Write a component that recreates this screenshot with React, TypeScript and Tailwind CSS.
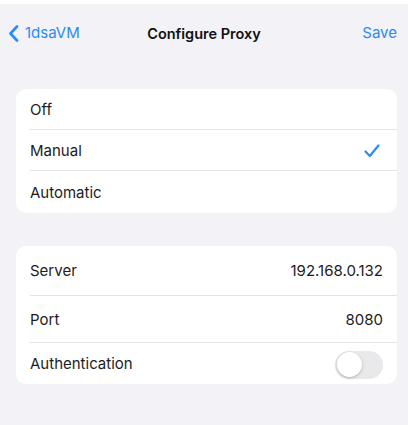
import React from "react";

const font = { fontFamily: "Inter, 'Liberation Sans', sans-serif" };

function Row({
  label,
  height,
  last,
  children,
}: {
  label: string;
  height: string;
  last?: boolean;
  children?: React.ReactNode;
}) {
  return (
    <div className="pl-[14px]">
      <div
        className={`flex items-center justify-between pr-[14px] pt-[2px] ${height} ${
          last ? "" : "border-b border-[#e3e3e6]"
        }`}
      >
        <span className="text-[15px] text-[#1c1c1e]">{label}</span>
        {children}
      </div>
    </div>
  );
}

export default function App() {
  return (
    <div className="w-[408px] h-[425px] bg-[#f2f2f7] overflow-hidden" style={font}>
      <div className="h-[4px] bg-white" />

      {/* Nav bar */}
      <div className="relative h-[58px] flex items-center justify-between pl-[8px] pr-[11px] pt-[1px]">
        <div className="flex items-center gap-[6px] text-[#2a8bf6]">
          <svg width="11" height="17" viewBox="0 0 11 17" fill="none">
            <path
              d="M9 1.5 L2.5 8.5 L9 15.5"
              stroke="currentColor"
              strokeWidth="2.6"
              strokeLinecap="round"
              strokeLinejoin="round"
            />
          </svg>
          <span className="text-[15px]">1dsaVM</span>
        </div>
        <span className="absolute left-1/2 -translate-x-1/2 text-[14.5px] font-semibold text-[#111]">
          Configure Proxy
        </span>
        <span className="text-[15px] text-[#2a8bf6]">Save</span>
      </div>

      {/* Mode card */}
      <div className="ml-[16px] mr-[11px] mt-[27px] bg-white rounded-[10px] overflow-hidden">
        <Row label="Off" height="h-[41px]" />
        <Row label="Manual" height="h-[41px]">
          <svg width="16" height="14" viewBox="0 0 16 14" fill="none" className="mr-[3px]">
            <path
              d="M1.5 7.5 L5.8 12 L14.5 1.5"
              stroke="#2a8bf6"
              strokeWidth="2.2"
              strokeLinecap="round"
              strokeLinejoin="round"
            />
          </svg>
        </Row>
        <Row label="Automatic" height="h-[42px]" last />
      </div>

      {/* Server card */}
      <div className="ml-[16px] mr-[11px] mt-[33px] bg-white rounded-[10px] overflow-hidden">
        <Row label="Server" height="h-[50px]">
          <span className="text-[15px] text-[#1c1c1e]">192.168.0.132</span>
        </Row>
        <Row label="Port" height="h-[47px]">
          <span className="text-[15px] text-[#1c1c1e]">8080</span>
        </Row>
        <Row label="Authentication" height="h-[41px]" last>
          <div className="w-[48px] h-[28px] rounded-full bg-[#e9e9eb] p-[2px] flex items-center">
            <div className="w-[25px] h-[25px] rounded-full bg-white shadow-[0_1px_3px_rgba(0,0,0,0.25)]" />
          </div>
        </Row>
      </div>
    </div>
  );
}
